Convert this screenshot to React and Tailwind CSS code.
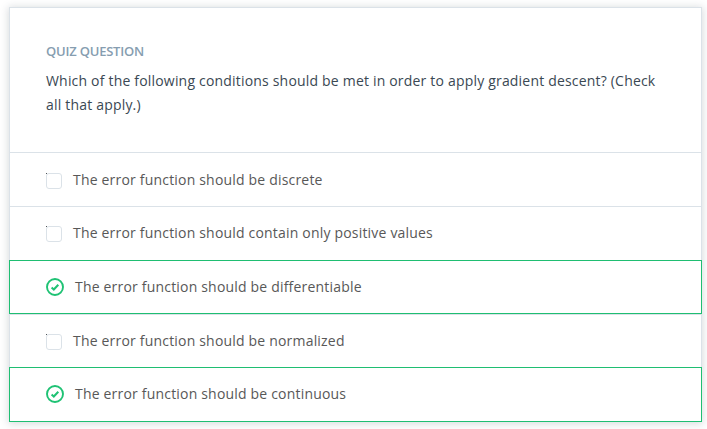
const rows = [
  { text: 'The error function should be discrete', cls: 'h-[54px] border-t border-[#dbe2e8] pt-[17px]' },
  { text: 'The error function should contain only positive values', cls: 'h-[54px] border-t border-[#dbe2e8] pt-4' },
  { text: 'The error function should be differentiable', on: true, cls: 'h-[54px] border border-[#1fbe72] -mx-px pt-4' },
  { text: 'The error function should be normalized', cls: 'h-[53px] border-t border-[#dbe2e8] pt-4' },
  { text: 'The error function should be continuous', on: true, cls: 'h-[55px] border border-[#1fbe72] -mx-px pt-4' },
];

function Check() {
  return (
    <svg width="18" height="18" viewBox="0 0 18 18" fill="none" stroke="#1fc274" className="mt-px shrink-0">
      <circle cx="9" cy="9" r="8" strokeWidth="1.9" />
      <path d="M5.6 9.5 7.8 11.5 12.3 6.7" strokeWidth="2" />
    </svg>
  );
}

function Box() {
  return (
    <span className="mt-[3px] size-4 shrink-0 rounded-[3px] border border-[#dbe2e8]">
      <span className="-ml-px -mt-px block size-px bg-[#4f5457]" />
    </span>
  );
}

export default function App() {
  return (
    <div className="h-[429px] w-[707px] overflow-hidden bg-white pl-[9px] pt-[7px] font-['Open_Sans',sans-serif] text-[#585858]">
      <div className="h-[415px] w-[693px] border border-[#dbe2e8] bg-white shadow-[0_1px_8px_1px_rgba(46,61,73,0.18)]">
        <div className="h-36 pl-9 pt-[33px]">
          <div className="text-[13px] leading-5 font-semibold tracking-[-0.21px] text-[#869db0]">QUIZ QUESTION</div>
          <p className="pt-2 text-[14px] leading-6 tracking-[0.19px] text-[#3a4853]">
            Which of the following conditions should be met in order to apply gradient descent? (Check<br />all that apply.)
          </p>
        </div>
        {rows.map((r) => (
          <div key={r.text} className={`flex items-start pl-9 text-[14px] leading-5 tracking-[0.19px] ${r.cls}`}>
            {r.on ? <Check /> : <Box />}
            <span className="ml-[11px]">{r.text}</span>
          </div>
        ))}
      </div>
    </div>
  );
}
